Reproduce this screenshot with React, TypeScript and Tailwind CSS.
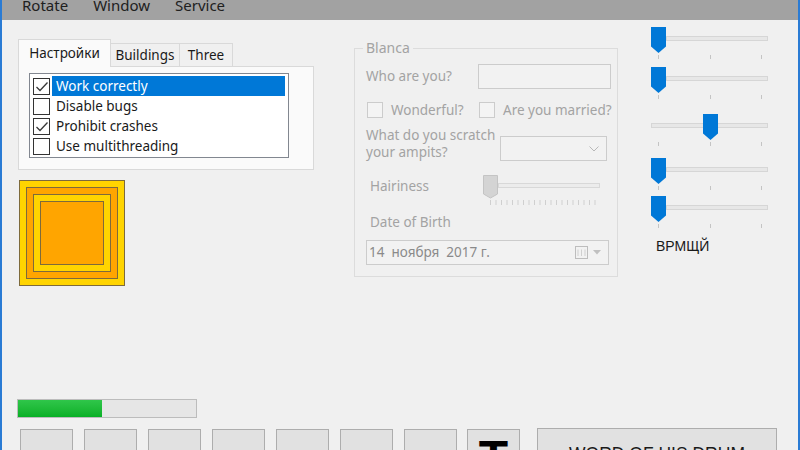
import React from 'react';

const items = [
    { label: 'Work correctly', checked: true, selected: true },
    { label: 'Disable bugs', checked: false },
    { label: 'Prohibit crashes', checked: true },
    { label: 'Use multithreading', checked: false },
];

const Check = () => (
    <svg width="16" height="16" viewBox="0 0 16 16" className="block">
        <path d="M2.5 8 L6 11.5 L13.5 3.5" fill="none" stroke="#3a3a3a" strokeWidth="1.3" />
    </svg>
);

const Slider = ({ at, full }: { at: number; full?: boolean }) => (
    <svg width="118" height="32" className="block">
        <rect
            x={full ? 0.5 : at + 15.5}
            y="9.5"
            width={full ? 116 : 116 - at - 15}
            height="4"
            fill="#e7e7e7"
            stroke="#d6d6d6"
        />
        {[7, 59, 110].map((x) => (
            <rect key={x} x={x} y="28" width="1" height="4" fill="#c4c4c4" />
        ))}
        <path transform={`translate(${at},0)`} d="M0 0H15V19.5L7.5 26L0 19.5Z" fill="#0078d7" />
    </svg>
);

const Hairiness = () => (
    <svg width="118" height="30" className="block">
        <rect x="15.5" y="8.5" width="101" height="4" fill="#ececec" stroke="#d8d8d8" />
        {Array.from({ length: 20 }).map((_, i) => (
            <rect key={i} x={7 + i * 5.5} y="25" width="1" height="5" fill="#cfcfcf" />
        ))}
        <path d="M0.5 0.5H14.5V19L7.5 23L0.5 19Z" fill="#d4d4d4" stroke="#c4c4c4" />
    </svg>
);

export default function App() {
    return (
        <div className="w-[800px] h-[450px] overflow-hidden bg-[#f0f0f0] border-x-2 border-[#2a7bd4] flex flex-col font-['Noto_Sans',sans-serif] text-[13.5px] text-[#1a1a1a]">
            {/* Menu */}
            <div className="h-[20px] shrink-0 bg-[#a2a2a2] overflow-hidden">
                <div className="flex gap-[25px] pl-[20px] -mt-[2px] text-[15px] leading-[15px] text-[#202020]">
                    <span>Rotate</span>
                    <span>Window</span>
                    <span>Service</span>
                </div>
            </div>

            <div className="flex flex-col">
                <div className="flex items-start">
                    {/* Left column */}
                    <div className="ml-[16px] mt-[19px] w-[296px] flex flex-col">
                        <div className="flex items-end h-[27px]">
                            <div className="w-[93px] h-[28px] border border-b-0 border-[#d9d9d9] bg-[#fafafa] text-center leading-[20px] pt-[3px] -mb-px relative z-10">
                                Настройки
                            </div>
                            <div className="w-[69px] h-[23px] border-t border-r border-[#d9d9d9] text-center leading-[20px] pt-px">
                                Buildings
                            </div>
                            <div className="w-[53px] h-[23px] border-t border-r border-[#d9d9d9] text-center leading-[20px] pt-px">
                                Three
                            </div>
                        </div>
                        <div className="h-[104px] border border-[#d9d9d9] bg-[#fafafa] pt-[6px] pl-[10px]">
                            <div className="w-[260px] h-[85px] border border-[#828790] bg-white pt-[2px] pl-[3px]">
                                {items.map((it) => (
                                    <div key={it.label} className="flex items-center h-[20px]">
                                        <div className="w-[17px] h-[17px] border border-[#333333] bg-white">
                                            {it.checked && <Check />}
                                        </div>
                                        <div
                                            className={`ml-[2px] h-[20px] w-[233px] pl-[4px] leading-[20px] ${
                                                it.selected ? 'bg-[#0078d7] text-white' : ''
                                            }`}
                                        >
                                            {it.label}
                                        </div>
                                    </div>
                                ))}
                            </div>
                        </div>
                        {/* Nested squares */}
                        <div className="ml-[1px] mt-[10px] w-[106px] h-[106px] bg-[#ffd400] border border-[#7d6a3c] p-[6px]">
                            <div className="w-full h-full bg-[#ffa500] border border-[#7d6a3c] p-[6px]">
                                <div className="w-full h-full bg-[#ffd400] border border-[#7d6a3c] p-[6px]">
                                    <div className="w-full h-full bg-[#ffa500] border border-[#7d6a3c]" />
                                </div>
                            </div>
                        </div>
                    </div>

                    {/* Group box */}
                    <fieldset className="ml-[40px] mt-[21px] w-[264px] border border-[#dcdcdc] text-[#a3a3a3] pb-[11px]">
                        <legend className="ml-[8px] px-[3px] text-[14px] leading-[14px]">Blanca</legend>
                        <div className="mt-[9px] h-[25px] flex items-center">
                            <span className="pl-[11px] w-[123px]">Who are you?</span>
                            <div className="w-[133px] h-[25px] border border-[#cccccc] bg-[#f2f2f2]" />
                        </div>
                        <div className="mt-[13px] h-[16px] flex items-center">
                            <div className="ml-[12px] w-[112px] flex items-center">
                                <div className="w-[16px] h-[16px] border border-[#cccccc] bg-[#f4f4f4]" />
                                <span className="ml-[8px]">Wonderful?</span>
                            </div>
                            <div className="w-[16px] h-[16px] border border-[#cccccc] bg-[#f4f4f4]" />
                            <span className="ml-[8px]">Are you married?</span>
                        </div>
                        <div className="mt-[9px] h-[34px] flex items-start">
                            <div className="pl-[11px] w-[145px] leading-[17px]">
                                What do you scratch
                                <br />
                                your ampits?
                            </div>
                            <div className="mt-[9px] w-[107px] h-[25px] border border-[#cccccc] bg-[#f2f2f2] flex items-center justify-end pr-[7px]">
                                <svg width="10" height="6" viewBox="0 0 10 6">
                                    <path d="M0.5 0.5L5 5L9.5 0.5" fill="none" stroke="#b8b8b8" />
                                </svg>
                            </div>
                        </div>
                        <div className="mt-[14px] h-[30px] flex items-start">
                            <span className="pl-[15px] w-[128px] leading-[19px] mt-[2px]">Hairiness</span>
                            <Hairiness />
                        </div>
                        <div className="mt-[8px] h-[19px] leading-[19px] pl-[15px]">Date of Birth</div>
                        <div className="mt-[8px] ml-[11px] w-[243px] h-[25px] border border-[#cccccc] bg-[#f2f2f2] flex items-center pl-[2px] pr-[7px] text-[#8a8a8a]">
                            <span className="whitespace-pre">14  ноября  2017 г.</span>
                            <div className="ml-auto flex items-center gap-[4px]">
                                <svg width="14" height="15" viewBox="0 0 14 15">
                                    <rect x="0.5" y="1.5" width="12" height="12" fill="none" stroke="#bdbdbd" />
                                    <path d="M3 4.5V11M6.5 4.5V11M10 4.5V11" stroke="#d0d0d0" />
                                </svg>
                                <svg width="8" height="5" viewBox="0 0 8 5">
                                    <path d="M0 0H8L4 4.5Z" fill="#c0c0c0" />
                                </svg>
                            </div>
                        </div>
                    </fieldset>

                    {/* Sliders */}
                    <div className="ml-[33px] flex flex-col">
                        <div className="mt-[7px]">
                            <Slider at={0} />
                        </div>
                        <div className="mt-[8px]">
                            <Slider at={0} />
                        </div>
                        <div className="mt-[15px]">
                            <Slider at={52} full />
                        </div>
                        <div className="mt-[12px]">
                            <Slider at={0} />
                        </div>
                        <div className="mt-[6px]">
                            <Slider at={0} />
                        </div>
                        <div className="mt-[10px] ml-[5px] text-[14px] leading-[16px] text-[#1a1a1a] font-['Liberation_Sans',sans-serif]">
                            ВРМЩЙ
                        </div>
                    </div>
                </div>

                {/* Progress */}
                <div className="ml-[15px] mt-[113px] w-[180px] h-[19px] border border-[#bcbcbc] bg-[#e6e6e6]">
                    <div className="w-[84px] h-full bg-gradient-to-b from-[#2fc64a] to-[#06b025]" />
                </div>

                {/* Buttons */}
                <div className="ml-[18px] mt-[10px] flex items-start gap-[11px]">
                    {[0, 1, 2, 3, 4, 5, 6].map((i) => (
                        <div key={i} className="mt-px w-[53px] h-[30px] border border-[#adadad] bg-[#e1e1e1]" />
                    ))}
                    <div className="mt-px -ml-px w-[53px] h-[40px] border border-[#adadad] bg-[#e1e1e1] text-center pt-[4px] text-[48px] leading-[48px] font-bold text-black font-['Liberation_Sans',sans-serif]">
                        T
                    </div>
                    <div className="ml-[6px] w-[240px] h-[40px] border border-[#adadad] bg-[#e1e1e1] text-center pt-[15px] text-[17.5px] leading-[20px] text-[#1a1a1a] font-['Liberation_Sans',sans-serif]">
                        WORD OF HIS DRUM
                    </div>
                </div>
            </div>
        </div>
    );
}
